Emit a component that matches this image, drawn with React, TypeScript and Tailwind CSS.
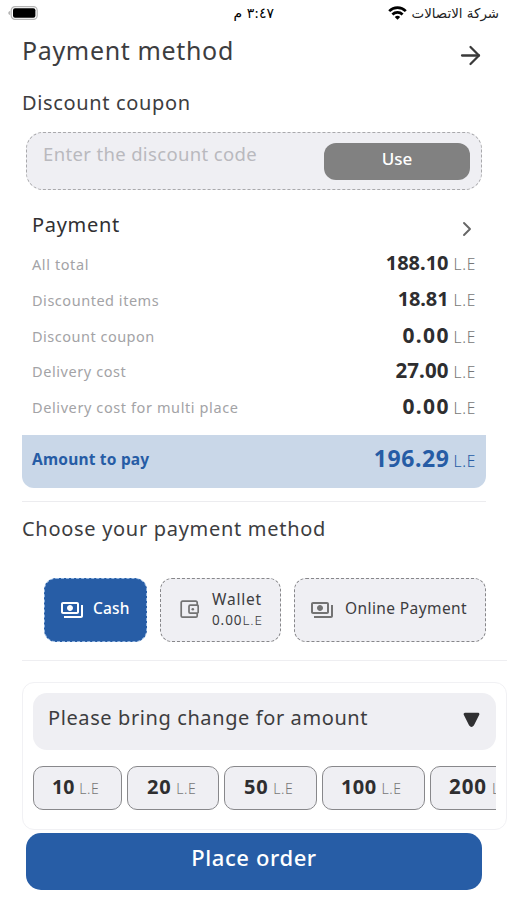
import { ArrowRight, ChevronRight } from "lucide-react";
import { MdOutlinePayments } from "react-icons/md";

const lines = [
  { label: "All total", value: "188.10", spacing: "tracking-[0.6px]", digits: "text-[20px]" },
  { label: "Discounted items", value: "18.81", spacing: "tracking-[0.53px]", digits: "text-[20px] -tracking-[0.1px]" },
  { label: "Discount coupon", value: "0.00", spacing: "tracking-[0.5px]", digits: "text-[21px] tracking-[1.4px] -mr-[1.4px]" },
  { label: "Delivery cost", value: "27.00", spacing: "tracking-[0.58px]", digits: "text-[20.5px] tracking-[0.1px]" },
  { label: "Delivery cost for multi place", value: "0.00", spacing: "tracking-[0.6px]", digits: "text-[21px] tracking-[1.4px] -mr-[1.4px]" },
];

const chips = [
  { amount: "10", width: "w-[89px]", digits: "text-[19.5px]" },
  { amount: "20", width: "w-[92px]", digits: "text-[20px] ml-[1px] tracking-[0.7px]" },
  { amount: "50", width: "w-[93px]", digits: "text-[20px] ml-[1px] tracking-[0.7px]" },
  { amount: "100", width: "w-[103px]", digits: "text-[20px] tracking-[0.4px]" },
  { amount: "200", width: "w-[103px]", digits: "text-[20.5px] tracking-[0.9px]" },
];

function StatusBar() {
  return (
    <header className="flex h-[26px] items-center pl-2 pr-2 text-black">
      <svg className="h-[14px] w-[30px]" viewBox="0 0 30 14">
        <path d="M2.2 5v4C.9 8.800 .3 8 .3 7s.6-1.800 1.900-2z" fill="#b5b5b5" />
        <rect x="3.200" y=".6" width="26" height="12.800" rx="3.800" fill="#fff" stroke="#b5b5b5" strokeWidth="1.200" />
        <rect x="5" y="2.300" width="22.400" height="9.400" rx="2" fill="#000" />
      </svg>
      <span dir="rtl" className="ml-[193px] w-[43px] whitespace-nowrap font-['DejaVu_Sans',sans-serif] text-[14px] leading-none">
        ٣:٤٧ م
      </span>
      <div className="ml-auto flex items-center gap-[5px]">
        <svg className="h-[14px] w-[19px]" viewBox="0 0 19 14" fill="none" stroke="#000" strokeWidth="2.700">
          <path d="M1.200 5.100a11.800 11.800 0 0 1 16.600 0" />
          <path d="M4.400 8.500a7.300 7.300 0 0 1 10.200 0" />
          <path d="M9.500 13.700 6.800 11a3.900 3.900 0 0 1 5.400 0z" fill="#000" stroke="none" />
        </svg>
        <span dir="rtl" className="mt-[2px] whitespace-nowrap font-['DejaVu_Sans',sans-serif] text-[13.400px] leading-none text-[#222]">
          شركة الاتصالات
        </span>
      </div>
    </header>
  );
}

function WalletIcon() {
  return (
    <svg className="h-[19px] w-[19px] shrink-0" viewBox="0 0 19 19" fill="none" stroke="#737373" strokeWidth="1.700">
      <path d="M17.200 5.200V2.500a1.300 1.300 0 0 0-1.300-1.300H2.500a1.300 1.300 0 0 0-1.300 1.300v13.400a1.300 1.300 0 0 0 1.300 1.300h13.400a1.300 1.300 0 0 0 1.300-1.300v-2.700" />
      <rect x="9" y="5.200" width="9.200" height="8" rx="1.200" />
      <circle cx="12.800" cy="9.200" r="1.300" fill="#737373" stroke="none" />
    </svg>
  );
}

export default function App() {
  return (
    <main className="h-[900px] w-[507px] overflow-hidden bg-white font-['Noto_Sans',sans-serif] text-[#3d3d3f]">
      <StatusBar />

      <div className="flex h-12 items-center justify-between pl-[22px] pr-[22px]">
        <h1 className="text-[25px] leading-[48px] tracking-[0.65px]">Payment method</h1>
        <ArrowRight className="mt-[11px] h-[29px] w-[29px] text-[#3a3a3a]" strokeWidth={1.9} />
      </div>
      <h2 className="h-[58px] pl-[22px] text-[20px] leading-[57px] tracking-[0.65px]">Discount coupon</h2>

      <section className="ml-[26px] flex h-[58px] w-[456px] justify-between rounded-[17px] border border-dashed border-[#a9a9ac] bg-[#efeff3] pl-4 pr-[11px]">
        <span className="text-[18.500px] leading-[42px] tracking-[0.35px] text-[#b9b9be]">Enter the discount code</span>
        <button className="mt-[10px] h-[37px] w-[146px] rounded-xl bg-[#818181] pb-[6px] text-[17px] font-medium leading-[31px] text-white">
          Use
        </button>
      </section>

      <section className="pt-[13px]">
        <div className="flex h-[43px] items-center justify-between pl-8 pr-[28px]">
          <h2 className="text-[20px] leading-[42px] tracking-[0.7px] text-[#303032]">Payment</h2>
          <ChevronRight className="mt-[9px] h-[24px] w-[24px] text-[#666]" strokeWidth={1.9} />
        </div>
        {lines.map((line) => (
          <div key={line.label} className="flex h-[35.800px] items-center justify-between pl-8 pr-[31px]">
            <span className={`text-[14.500px] leading-[36px] text-[#a3a3a6] ${line.spacing}`}>{line.label}</span>
            <span className="flex items-baseline gap-[5px] leading-[36px]">
              <b className={`text-[#2e2e30] ${line.digits}`}>{line.value}</b>
              <span className="text-[15.500px] font-light tracking-[0.7px] text-[#777]">L.E</span>
            </span>
          </div>
        ))}
        <div className="ml-[22px] mt-[10px] flex h-[53px] w-[464px] justify-between rounded-b-xl bg-[#c9d7e8] pl-[10px] pr-[10px] text-[#265ca5]">
          <b className="text-[15.500px] leading-[48px] tracking-[0.2px]">Amount to pay</b>
          <span className="flex items-baseline gap-1 leading-[46px]">
            <b className="text-[23px] tracking-[0.6px]">196.29</b>
            <span className="text-[15.500px] font-light tracking-[0.7px]">L.E</span>
          </span>
        </div>
      </section>

      <section className="ml-[22px] mt-[13px] w-[464px] border-t border-[#ececef]">
        <h2 className="h-[76px] text-[20px] leading-[53px] tracking-[0.7px]">Choose your payment method</h2>
        <div className="flex h-16 gap-[13px] pl-[22px]">
          <button className="flex w-[103px] items-center rounded-xl border border-dashed border-[#91b4df] bg-[#275da6] pl-[15px] text-white">
            <MdOutlinePayments className="h-6 w-6" />
            <span className="mb-[2px] ml-[9px] text-[15.500px] font-medium tracking-[0.2px]">Cash</span>
          </button>
          <button className="flex w-[121px] items-center rounded-xl border border-dashed border-[#87878a] bg-[#efeff3] pl-[19px]">
            <WalletIcon />
            <span className="ml-[13px] flex flex-col items-start">
              <span className="text-[15.500px] leading-[21px] tracking-[0.8px]">Wallet</span>
              <span className="text-[13.500px] leading-[21px] tracking-[0.9px]">0.00<span className="font-light">L.E</span></span>
            </span>
          </button>
          <button className="flex w-[192px] items-center rounded-xl border border-dashed border-[#87878a] bg-[#efeff3] pl-[15px]">
            <MdOutlinePayments className="h-6 w-6 text-[#737373]" />
            <span className="mb-[2px] ml-[11px] whitespace-nowrap text-[15.500px] tracking-[0.4px]">Online Payment</span>
          </button>
        </div>
      </section>

      <div className="ml-[22px] mt-[18px] h-px bg-[#eeeef1]" />

      <section className="ml-[22px] mt-[21px] h-[148px] w-[485px] rounded-xl border border-[#f1f1f4] px-[10px] pt-[10px]">
        <div className="flex h-[57px] items-start justify-between rounded-[14px] bg-[#efeff3] pl-[15px] pr-4">
          <h2 className="text-[20px] leading-[49px] tracking-[0.6px]">Please bring change for amount</h2>
          <svg className="mt-[19px] h-[16px] w-[17px]" viewBox="0 0 17 16">
            <path d="M2 2.200h13L9.600 12.800q-1.100 1.600-2.200 0z" fill="#303032" stroke="#303032" strokeWidth="2.800" strokeLinejoin="round" />
          </svg>
        </div>
        <div className="mt-[16px] flex gap-[5px] overflow-hidden">
          {chips.map((chip) => (
            <button key={chip.amount} className={`flex h-[44px] shrink-0 items-baseline gap-[5px] rounded-[10px] border border-[#88888b] bg-[#efeff3] pl-[18px] leading-[39px] ${chip.width}`}>
              <b className={`text-[#2e2e30] ${chip.digits}`}>{chip.amount}</b>
              <span className="text-[14px] font-light tracking-[0.5px] text-[#777]">L.E</span>
            </button>
          ))}
        </div>
      </section>

      <button className="ml-[26px] mt-[3px] block h-[57px] w-[456px] rounded-[15px] bg-[#275da6] pb-2 text-[22px] font-medium leading-[49px] tracking-[0.6px] text-white">
        Place order
      </button>
    </main>
  );
}
